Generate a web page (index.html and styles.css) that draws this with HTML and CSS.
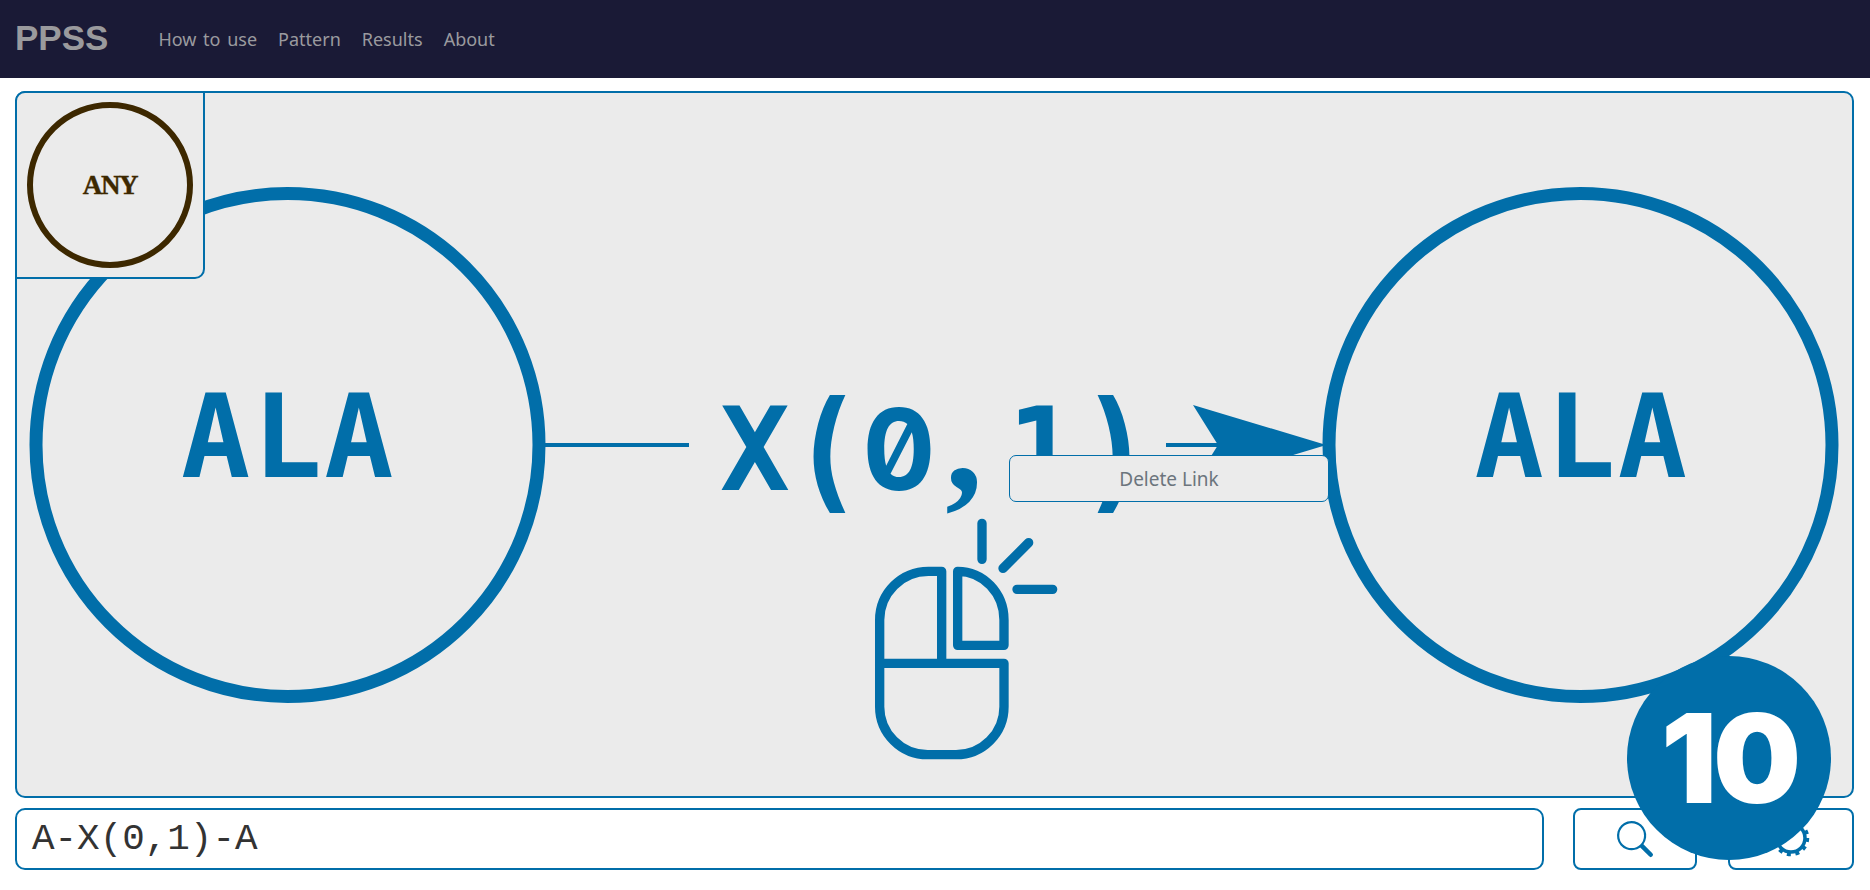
FILE: index.html
```html
<!DOCTYPE html>
<html lang="en">
<head>
<meta charset="utf-8">
<title>PPSS</title>
<link rel="stylesheet" href="styles.css">
</head>
<body>
<header class="navbar">
  <a class="brand">PPSS</a>
  <nav class="nav-links">
    <a class="nav-link">How to use</a>
    <a class="nav-link">Pattern</a>
    <a class="nav-link">Results</a>
    <a class="nav-link">About</a>
  </nav>
</header>
<main class="workspace">
  <section class="canvas">
    <svg class="diagram" viewBox="17 93 1835 703" xmlns="http://www.w3.org/2000/svg">
      <circle class="node-ring" cx="287.5" cy="445" r="251.5"/>
      <circle class="node-ring" cx="1580.5" cy="445" r="251.5"/>
      <text class="node-label" x="288.5" y="477">ALA</text>
      <text class="node-label" x="1582" y="477">ALA</text>
      <line class="link" x1="545" y1="445" x2="689" y2="445"/>
      <line class="link" x1="1166" y1="445" x2="1220" y2="445"/>
      <polygon class="arrow" points="1193,405 1323,444 1323,446 1193,485 1218,445"/>
      <text class="link-label"><tspan x="755" y="490">X</tspan><tspan class="paren" x="826" y="495">(</tspan><tspan class="zero" x="899" y="490">0</tspan><tspan class="comma" x="964" y="490">,</tspan><tspan x="1042" y="490">1</tspan><tspan class="paren" x="1117" y="495">)</tspan></text>
      <g class="mouse" transform="translate(840 500) scale(0.33333)">
        <path d="M119 490H492V620A144 144 0 0 1 348 764H263A144 144 0 0 1 119 620V360A146 146 0 0 1 265 214H305V490"/>
        <path d="M353 214A139 146 0 0 1 492 360V436H353Z"/>
        <path d="M426 70V178M566 128L489 205M531 268H638"/>
      </g>
    </svg>
    <div class="palette">
      <div class="palette-node">ANY</div>
    </div>
    <button class="delete-link">Delete Link</button>
  </section>
  <section class="controls">
    <div class="pattern-input">A-X(0,1)-A</div>
    <button class="icon-btn search-btn" aria-label="Search">
      <svg class="icon" viewBox="0 0 16 16" xmlns="http://www.w3.org/2000/svg"><path d="M11.742 10.344a6.5 6.5 0 1 0-1.397 1.398h-.001c.03.04.062.078.098.115l3.85 3.85a1 1 0 0 0 1.415-1.414l-3.85-3.85a1.007 1.007 0 0 0-.115-.1zM12 6.5a5.5 5.5 0 1 1-11 0 5.5 5.5 0 0 1 11 0z"/></svg>
    </button>
    <button class="icon-btn gear-btn" aria-label="Settings">
      <svg class="icon" viewBox="0 0 36 36" xmlns="http://www.w3.org/2000/svg">
        <circle class="gear-teeth" cx="18" cy="17" r="16.5"/>
        <circle class="gear-body" cx="18" cy="17" r="14"/>
      </svg>
    </button>
  </section>
  <div class="badge">10</div>
</main>
</body>
</html>
```
FILE: styles.css
```css
* { box-sizing: border-box; }
html, body { margin: 0; padding: 0; height: 100%; overflow: hidden; background: #fff; }

.navbar {
  height: 78px;
  background: #1a1a36;
  display: flex;
  align-items: center;
  padding-left: 15px;
}
.brand {
  font: 700 35px "Liberation Sans", Arial, sans-serif;
  color: #9a9a9d;
  margin-top: -3px;
}
.nav-links {
  display: flex;
  gap: 21px;
  margin-left: 50px;
}
.nav-link {
  font: 18px "Noto Sans", "Open Sans", sans-serif;
  word-spacing: 2px;
  color: #9a9a9f;
}

.workspace {
  position: relative;
  padding: 13px 16px 0 15px;
  display: flex;
  flex-direction: column;
  gap: 10px;
}
.canvas {
  position: relative;
  height: 707px;
  background: #ebebeb;
  border: 2px solid #016ea9;
  border-radius: 10px;
}
.diagram { display: block; width: 100%; height: 100%; }
.node-ring { fill: none; stroke: #016ea9; stroke-width: 13; }
.node-label, .link-label {
  font-family: "DejaVu Sans Mono", monospace;
  font-weight: 700;
  font-size: 116px;
  fill: #016ea9;
  text-anchor: middle;
}
.node-label { font-size: 115px; letter-spacing: 2.5px; }
.paren {
  font-family: Inter, "DejaVu Sans Mono", sans-serif;
  font-size: 130px;
  font-weight: 600;
}
.zero {
  font-family: Inter, "DejaVu Sans Mono", sans-serif;
  font-feature-settings: "zero" 1, "tnum" 1;
  font-size: 113px;
}
.comma {
  font-family: "Liberation Serif", serif;
  font-size: 150px;
}
.link { stroke: #016ea9; stroke-width: 4; }
.arrow { fill: #016ea9; }
.mouse path {
  fill: none;
  stroke: #016ea9;
  stroke-width: 28;
  stroke-linecap: round;
  stroke-linejoin: round;
}

.palette {
  position: absolute;
  left: -2px;
  top: -2px;
  width: 190px;
  height: 188px;
  border: 2px solid #016ea9;
  border-radius: 10px 0 10px 0;
  background: #ebebeb;
  display: flex;
  align-items: center;
  justify-content: center;
}
.palette-node {
  width: 166px;
  height: 166px;
  border: 6px solid #3d2800;
  border-radius: 50%;
  display: flex;
  align-items: center;
  justify-content: center;
  font: 700 27px "Liberation Serif", "Liberation Mono", serif;
  letter-spacing: -1.3px;
  -webkit-text-stroke: 0.4px #3d2800;
  color: #3d2800;
}

.delete-link {
  position: absolute;
  left: 992px;
  top: 362px;
  width: 320px;
  height: 47px;
  background: #ebebeb;
  border: 1px solid #016ea9;
  border-radius: 7px;
  font: 19px "Noto Sans", "Open Sans", sans-serif;
  color: #6c757d;
  padding: 0;
}

.controls {
  display: flex;
  height: 62px;
}
.pattern-input {
  flex: 1;
  background: #fff;
  border: 2px solid #016ea9;
  border-radius: 10px;
  font: 37.6px "Liberation Mono", "Courier New", monospace;
  color: #333;
  display: flex;
  align-items: center;
  padding-left: 15px;
}
.icon-btn {
  background: #fff;
  border: 2px solid #016ea9;
  border-radius: 8px;
  display: flex;
  align-items: center;
  justify-content: center;
  padding: 0;
}
.search-btn { width: 124px; margin-left: 29px; }
.gear-btn { width: 126px; margin-left: 31px; }
.icon { width: 36px; height: 36px; fill: #016ea9; overflow: visible; }
.gear-teeth { fill: none; stroke: #016ea9; stroke-width: 3.5; stroke-dasharray: 4 4.64; }
.gear-body { fill: none; stroke: #016ea9; stroke-width: 3.5; }

.badge {
  position: absolute;
  left: 1627px;
  top: 578px;
  width: 204px;
  height: 204px;
  border-radius: 50%;
  background: #016ea9;
  color: #fff;
  display: flex;
  align-items: center;
  justify-content: center;
  font: 900 124px Inter, "Noto Sans", sans-serif;
  letter-spacing: -4px;
}
```
